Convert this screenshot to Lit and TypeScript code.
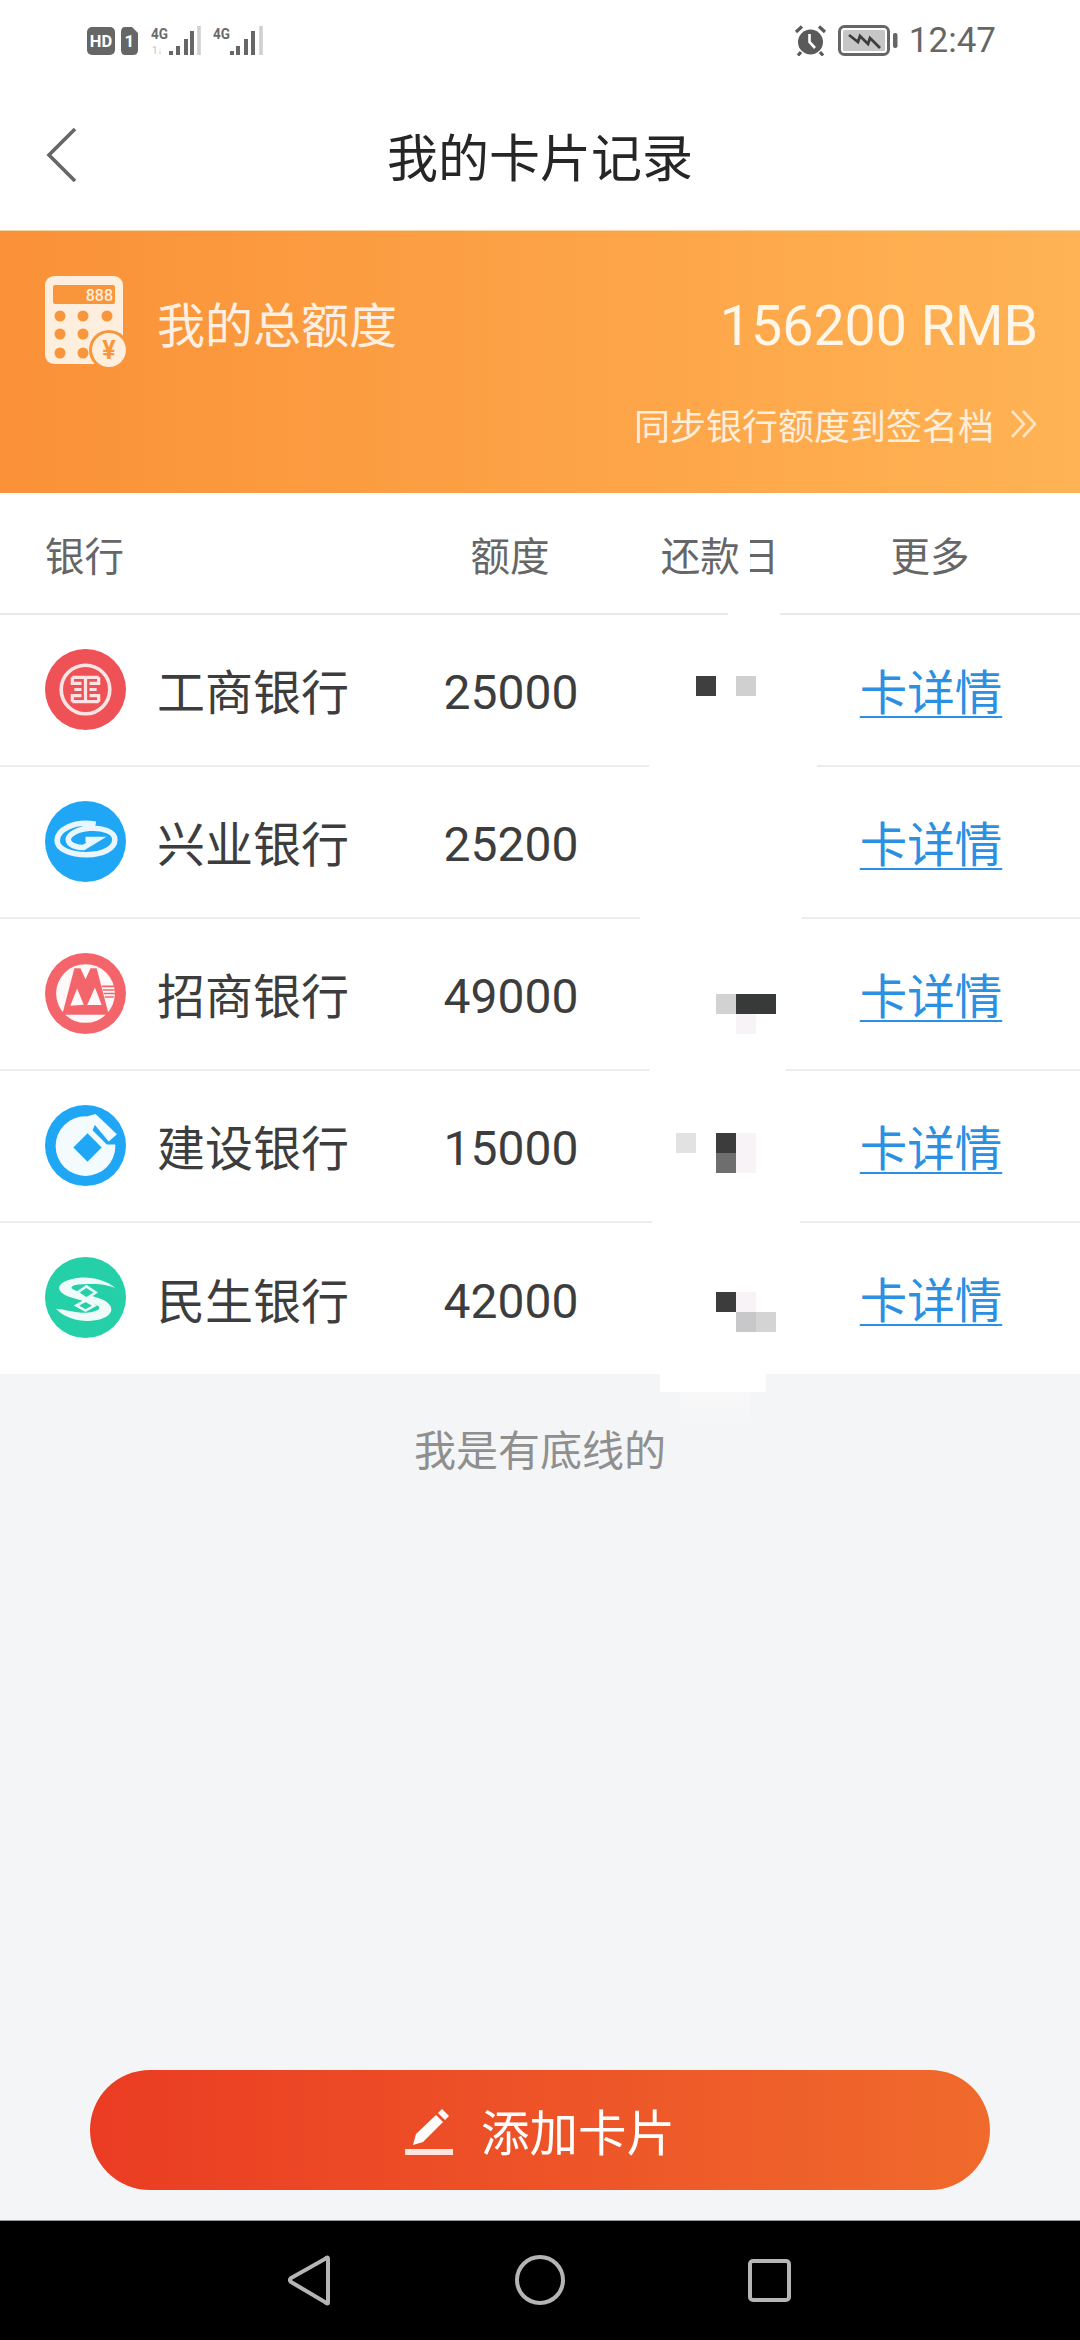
import { LitElement, html, css, svg } from "lit";
import { customElement } from "lit/decorators.js";

const logos: Record<string, unknown> = {
  icbc: svg`<circle cx="40" cy="40" r="40" fill="#ee5156"/>
    <circle cx="40" cy="40" r="24" fill="none" stroke="#fde3e3" stroke-width="3.6"/>
    <path d="M27 28H53M27 52H53M40 28V52M27 28V34H36M53 28V34H44M27 52V46H36M53 52V46H44M29 40H36M44 40H51" fill="none" stroke="#fde3e3" stroke-width="3.2"/>`,
  cib: svg`<circle cx="40" cy="40" r="40" fill="#1fa7f5"/>
    <path d="M50 23C28 19 12 29 12 39C12 48 26 53 41 53C57 53 69 47 69 38C69 30 56 26 44 27C32 28 23 33 23 38C23 44 33 46 38 46L51 38H40" fill="none" stroke="#e9f6fe" stroke-width="5.5"/>`,
  cmb: svg`<circle cx="40" cy="40" r="40" fill="#f4656b"/>
    <circle cx="40" cy="40" r="29" fill="#fff8f8"/>
    <path fill-rule="evenodd" fill="#f4656b" d="M29 15H35L40 26L45 15H51L63 61H17ZM31.7 35L25 52L38.3 51ZM49.3 34L41.7 51.3L56 51.3Z"/>
    <path d="M56 33H69M57 36.5H69M58 40H69M59 43.5H68" stroke="#f4656b" stroke-width="1.6"/>`,
  ccb: svg`<circle cx="40" cy="40" r="40" fill="#1fa7f5"/>
    <circle cx="40" cy="40.5" r="29.5" fill="#f4fbff"/>
    <path d="M52 13L75 34L74 39L61 39L47 25Z" fill="#1fa7f5"/>
    <path d="M42 11L50 9L71 29L63 36Z" fill="#f4fbff"/>
    <path d="M42 28L56 42L42 56L28 42Z" fill="#1fa7f5"/>`,
  cmbc: svg`<circle cx="40" cy="40" r="40" fill="#25d0a9"/>
    <path d="M70 31C58 21 40 18 26 22C10 26 10 35 26 40L50 47C60 51 48 56 36 55C26 54 16 51 11 51C20 62 42 66 56 61C70 56 68 46 54 41L30 33C22 30 28 27 38 27C50 26 62 27 70 31Z" fill="#eefbf8"/>
    <path d="M41 29L50 35L41 41L32 35Z" fill="#25d0a9" stroke="#eefbf8" stroke-width="2.5"/>
    <path d="M40 43L49 48L40 53L31 48Z" fill="#25d0a9" stroke="#eefbf8" stroke-width="2.5"/>`,
};

const banks = [
  { key: "icbc", name: "工商银行", amount: "25000" },
  { key: "cib", name: "兴业银行", amount: "25200" },
  { key: "cmb", name: "招商银行", amount: "49000" },
  { key: "ccb", name: "建设银行", amount: "15000" },
  { key: "cmbc", name: "民生银行", amount: "42000" },
];

// Redaction patches and mosaic squares that sit over the date column: [x, y, w, h, colour]
const patches: [number, number, number, number, string][] = [
  [741, 530, 9, 60, "#fff"],
  [728, 605, 52, 20, "#fff"],
  [649, 756, 168, 20, "#fff"],
  [640, 908, 162, 20, "#fff"],
  [650, 1060, 136, 20, "#fff"],
  [652, 1212, 148, 20, "#fff"],
  [660, 1374, 106, 18, "#fff"],
  [680, 1392, 70, 40, "linear-gradient(#f8f8f9, #f4f5f7)"],
  [696, 676, 20, 20, "#3f3f3f"],
  [736, 676, 20, 20, "#d0d0d0"],
  [716, 994, 20, 20, "#d2d2d2"],
  [736, 994, 40, 20, "#383a39"],
  [736, 1014, 20, 20, "#f7f3f6"],
  [676, 1133, 20, 20, "#e2e2e2"],
  [716, 1133, 20, 20, "#3b3c3b"],
  [716, 1153, 20, 20, "#6e6e6e"],
  [736, 1133, 20, 40, "#f8f3f6"],
  [716, 1292, 20, 20, "#3b3c3b"],
  [736, 1292, 20, 20, "#f8f3f6"],
  [736, 1312, 20, 20, "#c8c7c9"],
  [756, 1312, 20, 20, "#d4d4d4"],
];

@customElement("app-root")
export class AppRoot extends LitElement {
  static styles = css`
    :host { display: block; width: 1080px; height: 2340px; font-family: "Noto Sans CJK SC", Roboto, sans-serif; }
    .page { position: relative; display: flex; flex-direction: column; width: 1080px; height: 2340px; background: #f4f5f7; overflow: hidden; }

    .status { height: 70px; flex: none; background: #fff; display: flex; align-items: center; justify-content: space-between; padding: 11px 84px 0 87px; box-sizing: border-box; }
    .status-left, .status-right { display: flex; align-items: center; }
    .status-left { gap: 6px; }
    .status-left .sig { margin-left: 7px; }
    .status-left .sig2 { margin-left: 4px; }
    .status-right { gap: 11px; }
    .time { font-family: Roboto, sans-serif; font-size: 35px; line-height: 40px; color: #666; }

    .nav { height: 160px; flex: none; background: #fff; display: flex; align-items: center; justify-content: center; position: relative; padding-top: 10px; box-sizing: border-box; }
    .back { position: absolute; left: 45px; top: 57px; }
    .title { font-size: 51px; line-height: 60px; color: #262626; }

    .banner { height: 263px; flex: none; background: linear-gradient(90deg, #fa9138, #ffb354); border-top: 1px solid #f7d3a8; box-sizing: border-box; padding: 45px 42px 0 45px; color: #fff; display: flex; flex-direction: column; }
    .banner-top { display: flex; align-items: center; justify-content: space-between; height: 92px; }
    .total { display: flex; align-items: center; gap: 30px; font-size: 48px; color: #fdf0e2; }
    .sum { font-family: Roboto, sans-serif; font-size: 55.5px; color: #fff6ea; padding-top: 8px; }
    .sync { margin-top: 34px; display: flex; justify-content: flex-end; align-items: center; gap: 16px; font-size: 36px; line-height: 44px; color: #ffeeda; }

    .head, .row { display: grid; grid-template-columns: 360px 210px 210px 210px; padding: 0 45px; align-items: center; background: #fff; }
    .head { height: 122px; font-size: 39.5px; color: #666; border-bottom: 2px solid #e9e9e9; box-sizing: border-box; }
    .row { height: 152px; border-bottom: 2px solid #ececec; box-sizing: border-box; padding-bottom: 2px; }
    .row.last { border-bottom: none; height: 151px; padding-bottom: 2px; }
    .c { text-align: center; }
    .name { display: flex; align-items: center; gap: 31px; font-size: 48px; color: #3d3d3d; }
    .name svg { flex: none; }
    .amount { font-family: Roboto, sans-serif; font-size: 48px; color: #3d3d3d; padding: 7px 0 0 2px; }
    .cell-link { padding-left: 2px; }
    .link { font-size: 47.5px; color: #2b8fe2; text-decoration: underline; text-underline-offset: 6px; text-decoration-thickness: 2px; }

    .foot { text-align: center; font-size: 42px; line-height: 50px; color: #8f8f8f; margin-top: 49px; flex: 1; }
    .btn-wrap { flex: none; padding: 0 90px 30px; }
    .btn { height: 120px; border-radius: 60px; background: linear-gradient(90deg, #ea3c23, #f06a2c); display: flex; align-items: center; justify-content: center; gap: 28px; color: #fff; font-size: 48.5px; }
    .btn svg { margin-top: 4px; }

    .bar { height: 120px; flex: none; background: #000; border-top: 1px solid #999; box-sizing: border-box; display: flex; }
    .bar svg { display: block; }

    .patch { position: absolute; }
  `;

  render() {
    return html`<div class="page">
      <div class="status">
        <div class="status-left">
          <svg width="28" height="28" viewBox="0 0 28 28"><rect width="28" height="28" rx="5" fill="#666"/><text x="14" y="20" text-anchor="middle" font-family="Roboto" font-weight="700" font-size="16.5" fill="#fff">HD</text></svg>
          <svg width="17" height="28" viewBox="0 0 17 28"><path d="M4 0H11L17 6V23Q17 28 12 28H4Q0 28 0 23V5Q0 0 4 0Z" fill="#666"/><text x="8.5" y="20" text-anchor="middle" font-family="Roboto" font-weight="700" font-size="17" fill="#fff">1</text></svg>
          <svg class="sig" width="52" height="30" viewBox="0 0 52 30"><text x="0" y="13" font-family="Roboto" font-size="15" font-weight="700" fill="#6a6a6a" textLength="17" lengthAdjust="spacingAndGlyphs">4G</text><text x="1" y="28" font-family="Roboto" font-size="10" fill="#c4c4c4">1↓</text>
            <path d="M20 29V25M27 29V20M35 29V13M41 29V5" stroke="#666" stroke-width="4"/><path d="M48 29V0" stroke="#d0d0d0" stroke-width="3.6"/></svg>
          <svg class="sig2" width="52" height="30" viewBox="0 0 52 30"><text x="0" y="13" font-family="Roboto" font-size="15" font-weight="700" fill="#6a6a6a" textLength="17" lengthAdjust="spacingAndGlyphs">4G</text>
            <path d="M19 29V25M25 29V20M33 29V13M40 29V5" stroke="#666" stroke-width="4"/><path d="M48 29V0" stroke="#d0d0d0" stroke-width="3.6"/></svg>
        </div>
        <div class="status-right">
          <svg width="33" height="31" viewBox="0 0 33 31"><circle cx="16.5" cy="17" r="12.5" fill="#5a5a5a"/><path d="M15.5 9V17L21 23" stroke="#fff" stroke-width="2.6" fill="none"/><path d="M2 7L8 1.5M31 7L25 1.5M7 27L4 30.5M26 27L29 30.5" stroke="#5a5a5a" stroke-width="3.2"/></svg>
          <svg width="60" height="31" viewBox="0 0 60 31"><rect x="1.5" y="1.5" width="49" height="28" rx="5" fill="#fff" stroke="#666" stroke-width="3"/><rect x="5" y="5" width="42" height="21" rx="1.5" fill="#c6c6c6"/><path d="M11 10L20 17L22 11L30 19L32 13L42 23" fill="none" stroke="#3d3d3d" stroke-width="2.8"/><rect x="55" y="8" width="4.5" height="15" rx="2" fill="#666"/></svg>
          <span class="time">12:47</span>
        </div>
      </div>

      <div class="nav">
        <svg class="back" width="32" height="56" viewBox="0 0 32 56"><path d="M30 2L4 28L30 54" fill="none" stroke="#666" stroke-width="3.6"/></svg>
        <span class="title">我的卡片记录</span>
      </div>

      <div class="banner">
        <div class="banner-top">
          <div class="total">
            <svg width="82" height="92" viewBox="0 0 82 92">
              <rect x="0" y="0" width="78" height="88" rx="9" fill="#fdeedd"/>
              <rect x="8" y="9" width="62" height="19" rx="2" fill="#f9963c"/>
              <text x="68" y="25" text-anchor="end" font-family="Roboto" font-size="16" font-weight="500" fill="#fdeedd">888</text>
              <g fill="#f9963c"><circle cx="15" cy="40" r="5.5"/><circle cx="38" cy="40" r="5.5"/><circle cx="62" cy="40" r="5.5"/><circle cx="15" cy="58" r="5.5"/><circle cx="38" cy="58" r="5.5"/><circle cx="15" cy="77" r="5.5"/><circle cx="38" cy="77" r="5.5"/></g>
              <circle cx="64" cy="74" r="20" fill="#f9963c"/><circle cx="64" cy="74" r="17" fill="#fdeedd"/>
              <text x="64" y="83" text-anchor="middle" font-family="Roboto" font-size="25" font-weight="700" fill="#f9963c">¥</text>
            </svg>
            <span>我的总额度</span>
          </div>
          <span class="sum">156200 RMB</span>
        </div>
        <div class="sync">
          <span>同步银行额度到签名档</span>
          <svg width="28" height="30" viewBox="0 0 28 30"><path d="M2 2L14 15L2 28M13 2L25 15L13 28" fill="none" stroke="#ffe5c4" stroke-width="2.6"/></svg>
        </div>
      </div>

      <div class="head">
        <span>银行</span><span class="c">额度</span><span class="c">还款日</span><span class="c">更多</span>
      </div>
      ${banks.map((b, i) => html`<div class="row ${i === banks.length - 1 ? "last" : ""}">
        <div class="name"><svg width="81" height="81" viewBox="0 0 80 80">${logos[b.key]}</svg><span>${b.name}</span></div>
        <span class="c amount">${b.amount}</span>
        <span></span>
        <span class="c cell-link"><span class="link">卡详情</span></span>
      </div>`)}

      <div class="foot">我是有底线的</div>

      <div class="btn-wrap">
        <div class="btn">
          <svg width="48" height="46" viewBox="0 0 48 46"><path d="M8 36L11 25L31 6L38 13L18 33Z" fill="#fff"/><path d="M33 4L37 0L44 7L40 11Z" fill="#fff"/><rect x="0" y="40" width="48" height="6" fill="#fde4dc"/></svg>
          <span>添加卡片</span>
        </div>
      </div>

      <div class="bar">
        <svg width="1080" height="119" viewBox="0 0 1080 119">
          <path d="M328 38V81Q328 84 325 81L291 61Q289 59 291 57L325 38Q328 35 328 38Z" fill="none" stroke="#b5b5b5" stroke-width="4"/>
          <ellipse cx="540" cy="59" rx="23" ry="23" fill="none" stroke="#b5b5b5" stroke-width="4"/>
          <rect x="750" y="40" width="39" height="39" rx="3" fill="none" stroke="#b5b5b5" stroke-width="4"/>
        </svg>
      </div>

      ${patches.map(([x, y, w, h, c]) => html`<div class="patch" style="left:${x}px;top:${y}px;width:${w}px;height:${h}px;background:${c}"></div>`)}
    </div>`;
  }
}
